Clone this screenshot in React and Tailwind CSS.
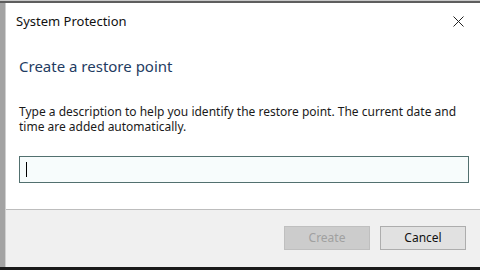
export default function App() {
  return (
    <div className="w-[480px] h-[270px] flex flex-col bg-[#9c9c9c] overflow-hidden" style={{ fontFamily: '"Noto Sans", "Segoe UI", sans-serif' }}>
      <div className="h-[1px] bg-[#c8c8c8]" />
      <div className="h-[2px] bg-[#5e5e5e]" />
      <div className="flex flex-1">
        <div className="w-[6px] bg-[#a3a3a3] border-r border-[#d0d0d0]" />
        <div className="flex-1 flex flex-col">
          <div className="h-[206px] bg-white flex flex-col">
            <div className="flex items-center justify-between h-[36px] pl-[10px] pr-[16px]">
              <span className="text-[13px] text-[#111] leading-none">System Protection</span>
              <svg width="11" height="11" viewBox="0 0 11 11">
                <path d="M0.5 0.5 L10.5 10.5 M10.5 0.5 L0.5 10.5" stroke="#222" strokeWidth="1" fill="none" />
              </svg>
            </div>
            <div className="pl-[13px] mt-[17px] text-[15px] leading-[20px] text-[#1f3c62]">Create a restore point</div>
            <div className="pl-[13px] pr-[12px] mt-[28px] text-[12px] leading-[15px] text-[#1a1a1a]">
              Type a description to help you identify the restore point. The current date and time are added automatically.
            </div>
            <div className="ml-[13px] mr-[11px] mt-[22px] h-[27px] border border-[#52706f] bg-[#f7fcfc] flex items-center pl-[6px]">
              <div className="w-[1px] h-[15px] bg-black" />
            </div>
          </div>
          <div className="h-[1px] bg-[#bdbdbd]" />
          <div className="h-[57px] bg-[#f0f0f0] flex justify-end items-start pt-[16px] pr-[14px] gap-[10px]">
            <div className="w-[86px] h-[24px] bg-[#cccccc] border border-[#bfbfbf] flex items-center justify-center text-[12px] text-[#a0a0a0]">Create</div>
            <div className="w-[86px] h-[24px] bg-[#e1e1e1] border border-[#adadad] flex items-center justify-center text-[12px] text-[#111]">Cancel</div>
          </div>
        </div>
      </div>
      <div className="h-[3px] bg-[#1a1a1a]" />
    </div>
  );
}
